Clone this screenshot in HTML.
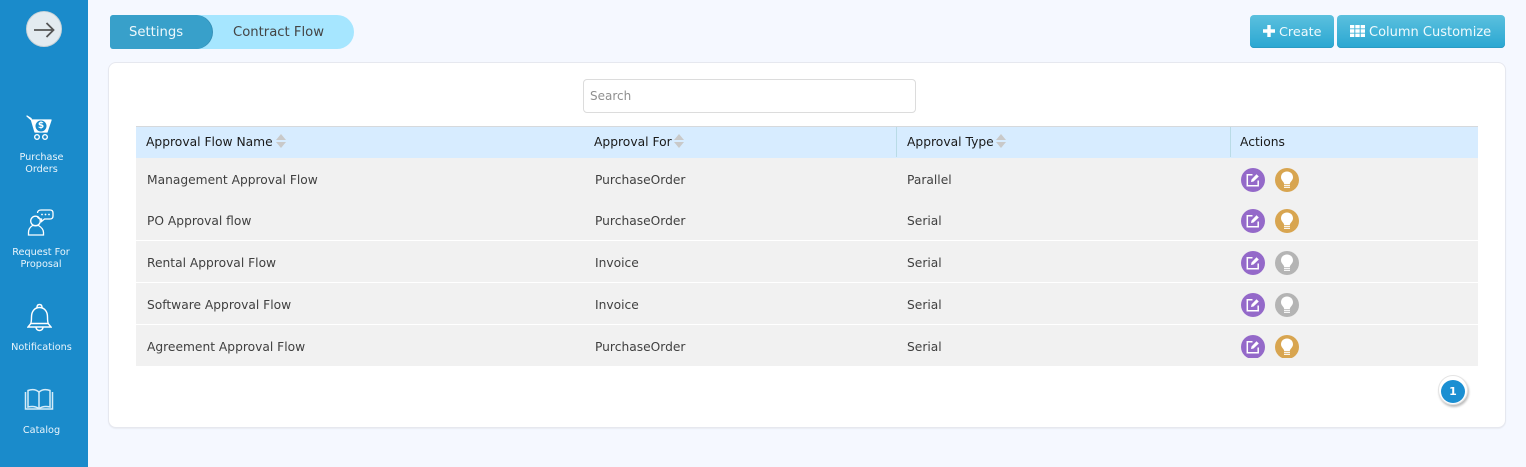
<!DOCTYPE html>
<html><head><meta charset="utf-8"><style>
html,body{margin:0;padding:0;width:1526px;height:467px;overflow:hidden;background:#f5f8ff;font-family:"DejaVu Sans","Liberation Sans",sans-serif;color:#3f3f3f}
.a{position:absolute;white-space:nowrap}
.t{font-size:12.25px;line-height:16px;color:#404040}
.h{font-size:12.3px;line-height:16px;color:#1a1a1a}
.s{font-size:9.7px;line-height:12px;color:#eaf5fc;text-align:center;left:0;width:83px}
.row{position:absolute;left:136px;width:1342px;background:#f1f1f1}
svg{position:absolute;display:block}
</style></head><body>
<div class="a" style="left:0;top:0;width:88px;height:467px;background:#1a8bcb"></div>
<div class="a" style="left:26px;top:11px;width:34px;height:34px;border-radius:50%;background:#e3ebf0;border:1px solid #c9d3d8"></div>
<svg style="left:26px;top:11px" width="36" height="36" viewBox="0 0 36 36"><path d="M8 19H27.500M20.500 12L27.500 19L20.500 26" fill="none" stroke="#555" stroke-width="1.800"/></svg>

<svg style="left:25px;top:113px" width="30" height="28" viewBox="0 0 30 28"><path d="M2 3L6 5.500L10 19H22L26 7H6.500Z" fill="#fff" stroke="#fff" stroke-width="1.300" stroke-linejoin="round"/><circle cx="16" cy="13" r="5.500" fill="#1a8bcb"/><circle cx="12" cy="24" r="2.300" fill="none" stroke="#fff" stroke-width="1.400"/><circle cx="20" cy="24" r="2.300" fill="none" stroke="#fff" stroke-width="1.400"/></svg>
<div class="a" style="left:36px;top:121px;width:10px;text-align:center;font-size:9px;line-height:11px;font-weight:bold;color:#fff">$</div>
<div class="a s" style="top:152px">Purchase</div>
<div class="a s" style="top:164px">Orders</div>

<svg style="left:27px;top:208px" width="27" height="28" viewBox="0 0 27 28"><g fill="none" stroke="#fff" stroke-width="1.300"><circle cx="8.500" cy="13" r="4.800"/><path d="M1.500 27V24.500C1.500 21 4 18.500 5.500 17.500H11.500C14 19 16.500 21 16.500 24.500V27Z"/><path d="M10.500 5C10.500 3 12 2 14 2H23C25 2 26 3 26 5V8C26 10 25 11 23 11H17.500L14.500 13.500V11C12 11 10.500 10 10.500 8"/></g><circle cx="15" cy="6.500" r=".9" fill="#fff"/><circle cx="18.500" cy="6.500" r=".9" fill="#fff"/><circle cx="22" cy="6.500" r=".9" fill="#fff"/></svg>
<div class="a s" style="top:247px;width:82px">Request For</div>
<div class="a s" style="top:259px;width:82px">Proposal</div>

<svg style="left:27px;top:303px" width="25" height="29" viewBox="0 0 25 29"><g fill="none" stroke="#fff" stroke-width="1.400"><path d="M1 24H24L21.500 21C20.500 19.500 20.500 17 20.500 14C20.500 8 17 4.500 12.500 4.500S4.500 8 4.500 14C4.500 17 4.500 19.500 3.500 21Z"/><path d="M10 4.500C10 2.500 11 1.500 12.500 1.500S15 2.500 15 4.500"/><path d="M9 24C9 26.500 11 27.500 12.500 27.500S16 26.500 16 24"/><path d="M4 20.500H21"/></g></svg>
<div class="a s" style="top:342px">Notifications</div>

<svg style="left:24px;top:388px" width="30" height="24" viewBox="0 0 30 24"><g fill="none" stroke="#d6ecf8" stroke-width="1.500"><path d="M1.500 4V21H28.500V4"/><path d="M4 2.500C8 1 12 1.500 15 4C18 1.500 22 1 26 2.500V19C22 18 18 18.500 15 20.500C12 18.500 8 18 4 19Z"/><path d="M15 4V20.500"/></g></svg>
<div class="a s" style="top:425px">Catalog</div>

<div class="a" style="left:110px;top:15px;width:244px;height:34px;background:#a6e6ff;border-radius:3px 17px 17px 3px"></div>
<div class="a" style="left:110px;top:15px;width:102px;height:34px;background:#38a0ca;border-radius:3px 17px 17px 3px;box-shadow:1px 0 0 #3590b8"></div>
<div class="a" style="left:129px;top:24px;font-size:13.2px;line-height:17px;color:#eef8fc">Settings</div>
<div class="a" style="left:233px;top:24px;font-size:13.2px;line-height:17px;color:#444">Contract Flow</div>

<div class="a" style="left:1250px;top:15px;width:84px;height:33px;border-radius:4px;background:linear-gradient(#5bc0de,#2aa7d2);box-shadow:inset 0 -1px 0 #2a9bc4"></div>
<div class="a" style="left:1337px;top:15px;width:168px;height:33px;border-radius:4px;background:linear-gradient(#5bc0de,#2aa7d2);box-shadow:inset 0 -1px 0 #2a9bc4"></div>
<svg style="left:1263px;top:25px" width="12" height="12" viewBox="0 0 12 12"><path d="M4.300 0H7.700V4.300H12V7.700H7.700V12H4.300V7.700H0V4.300H4.300Z" fill="#fff"/></svg>
<div class="a" style="left:1279px;top:25px;font-size:12.8px;line-height:16px;color:#eefafd">Create</div>
<svg style="left:1350px;top:25px" width="15" height="12" viewBox="0 0 15 12" fill="#fff"><path d="M0 0h4.300v3.400H0zM5.300 0h4.400v3.400H5.300zM10.700 0H15v3.400h-4.300zM0 4.300h4.300v3.400H0zM5.300 4.300h4.400v3.400H5.300zM10.700 4.300H15v3.400h-4.300zM0 8.600h4.300V12H0zM5.300 8.600h4.400V12H5.300zM10.700 8.600H15V12h-4.300z"/></svg>
<div class="a" style="left:1369px;top:25px;font-size:13px;line-height:16px;color:#eefafd">Column Customize</div>

<div class="a" style="left:108px;top:62px;width:1396px;height:364px;background:#fff;border:1px solid #e6e8ef;border-radius:8px;box-shadow:0 1px 1px #e9ecf3"></div>
<div class="a" style="left:583px;top:79px;width:331px;height:32px;background:#fff;border:1px solid #dcdcdc;border-radius:4px"></div>
<div class="a" style="left:590px;top:88px;font-size:12px;line-height:16px;color:#8f8f8f">Search</div>

<div class="a" style="left:136px;top:126px;width:1342px;height:31px;background:#d7ecff;border-top:1px solid #d6d9dc;border-bottom:1px solid #d3dfe6"></div>
<div class="a" style="left:896px;top:127px;width:1px;height:30px;background:#b9dbe6"></div>
<div class="a" style="left:1230px;top:127px;width:1px;height:30px;background:#b9dbe6"></div>
<div class="row" style="top:158px;height:82px"></div>
<div class="row" style="top:241px;height:41px"></div>
<div class="row" style="top:283px;height:41px"></div>
<div class="row" style="top:325px;height:41px"></div>

<div class="a h" style="left:146px;top:134px">Approval Flow Name</div>
<svg style="left:276px;top:134px" width="10" height="14" viewBox="0 0 10 14" fill="#c9c9c9"><path d="M5 0L10 6H0ZM5 14L0 8H10Z"/></svg>
<div class="a h" style="left:594px;top:134px">Approval For</div>
<svg style="left:674px;top:134px" width="10" height="14" viewBox="0 0 10 14" fill="#c9c9c9"><path d="M5 0L10 6H0ZM5 14L0 8H10Z"/></svg>
<div class="a h" style="left:907px;top:134px">Approval Type</div>
<svg style="left:996px;top:134px" width="10" height="14" viewBox="0 0 10 14" fill="#c9c9c9"><path d="M5 0L10 6H0ZM5 14L0 8H10Z"/></svg>
<div class="a h" style="left:1240px;top:134px">Actions</div>

<div class="a t" style="left:147px;top:172px">Management Approval Flow</div>
<div class="a t" style="left:595px;top:172px">PurchaseOrder</div>
<div class="a t" style="left:907px;top:172px">Parallel</div>
<div class="a t" style="left:147px;top:213px">PO Approval flow</div>
<div class="a t" style="left:595px;top:213px">PurchaseOrder</div>
<div class="a t" style="left:907px;top:213px">Serial</div>
<div class="a t" style="left:147px;top:255px">Rental Approval Flow</div>
<div class="a t" style="left:595px;top:255px">Invoice</div>
<div class="a t" style="left:907px;top:255px">Serial</div>
<div class="a t" style="left:147px;top:297px">Software Approval Flow</div>
<div class="a t" style="left:595px;top:297px">Invoice</div>
<div class="a t" style="left:907px;top:297px">Serial</div>
<div class="a t" style="left:147px;top:339px">Agreement Approval Flow</div>
<div class="a t" style="left:595px;top:339px">PurchaseOrder</div>
<div class="a t" style="left:907px;top:339px">Serial</div>

<svg style="left:1241px;top:168px" width="60" height="190" viewBox="0 0 60 190">
<defs>
<g id="e"><circle cx="12" cy="12" r="12" fill="#9469c9"/><path d="M11.500 6.800H6.300V17.700H17.200V12.500" fill="none" stroke="#fff" stroke-width="1.500"/><path d="M10 14L10.500 11.500L15.500 6.300L17.800 8.500L12.500 13.500Z" fill="#fff"/></g>
<g id="b"><path d="M12 3.500C8.500 3.500 6 6 6 9.300C6 12.500 8.800 13.500 9.200 16H14.800C15.200 13.500 18 12.500 18 9.300C18 6 15.500 3.500 12 3.500Z" fill="#fff"/><path d="M9 17.300H15M9 19.300H15" stroke="#fff" stroke-width="1.200"/></g>
</defs>
<use href="#e" x="0" y="0"/><circle cx="46" cy="12" r="12" fill="#d8a550"/><use href="#b" x="34" y="0"/>
<use href="#e" x="0" y="41"/><circle cx="46" cy="53" r="12" fill="#d8a550"/><use href="#b" x="34" y="41"/>
<use href="#e" x="0" y="83"/><circle cx="46" cy="95" r="12" fill="#b4b4b4"/><use href="#b" x="34" y="83"/>
<use href="#e" x="0" y="125"/><circle cx="46" cy="137" r="12" fill="#b4b4b4"/><use href="#b" x="34" y="125"/>
<use href="#e" x="0" y="167"/><circle cx="46" cy="179" r="12" fill="#d8a550"/><use href="#b" x="34" y="167"/>
</svg>

<div class="a" style="left:1438px;top:375px;width:30px;height:30px;border-radius:50%;background:#fff;border:1px solid #e4e4e4;box-sizing:border-box;box-shadow:1px 2px 2px #bdbdbd"></div>
<div class="a" style="left:1441px;top:380px;width:24px;height:23px;border-radius:50%;background:#1b8fd2;color:#fff;font-size:11px;font-weight:bold;line-height:23px;text-align:center">1</div>
</body></html>
